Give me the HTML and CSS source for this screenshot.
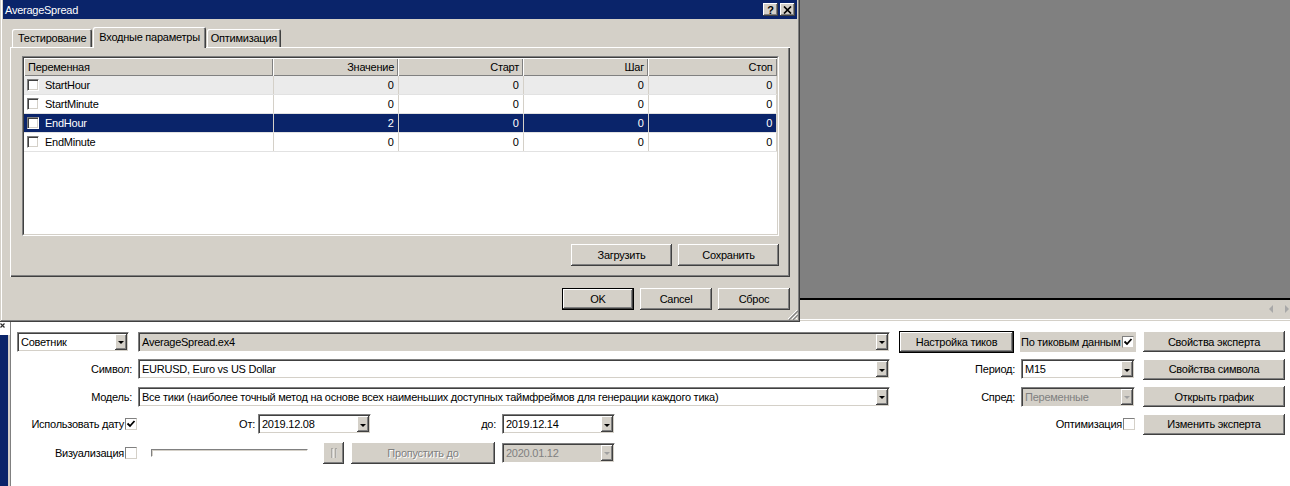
FILE: index.html
```html
<!DOCTYPE html>
<html lang="ru">
<head>
  <meta charset="UTF-8" />
  <title>Тестер стратегий</title>
  <link rel="stylesheet" href="styles.css">
</head>
<body>
  <div class="top">
    <div class="dialog">
      <div class="titlebar">
        <span>AverageSpread</span>
        <div class="caption">
          <span class="cap-btn">?</span>
          <span class="cap-btn">
            <svg width="9" height="8" viewBox="0 0 9 8"><path d="M1 0.5 L8 7.5 M8 0.5 L1 7.5" stroke="#000" stroke-width="1.7"/></svg>
          </span>
        </div>
      </div>

      <div class="dlg-body">
        <div class="tabs">
          <div class="tab">Тестирование</div>
          <div class="tab active">Входные параметры</div>
          <div class="tab narrow">Оптимизация</div>
        </div>

        <div class="tab-panel">
          <div class="grid-box">
            <div class="grid-inner">
              <table class="params">
                <colgroup>
                  <col class="c-name"><col class="c-num"><col class="c-num"><col class="c-num"><col>
                </colgroup>
                <thead>
                  <tr><th class="left">Переменная</th><th>Значение</th><th>Старт</th><th>Шаг</th><th>Стоп</th></tr>
                </thead>
                <tbody>
                  <tr class="hover"><td><span class="name"><span class="chk"></span>StartHour</span></td><td>0</td><td>0</td><td>0</td><td>0</td></tr>
                  <tr><td><span class="name"><span class="chk"></span>StartMinute</span></td><td>0</td><td>0</td><td>0</td><td>0</td></tr>
                  <tr class="selected"><td><span class="name"><span class="chk"></span>EndHour</span></td><td>2</td><td>0</td><td>0</td><td>0</td></tr>
                  <tr><td><span class="name"><span class="chk"></span>EndMinute</span></td><td>0</td><td>0</td><td>0</td><td>0</td></tr>
                </tbody>
              </table>
            </div>
          </div>
          <div class="panel-btns">
            <button class="btn">Загрузить</button>
            <button class="btn">Сохранить</button>
          </div>
        </div>

        <div class="dlg-btns">
          <button class="btn default">OK</button>
          <button class="btn">Cancel</button>
          <button class="btn">Сброс</button>
        </div>
      </div>

      <svg class="grip" width="11" height="11" viewBox="0 0 11 11">
        <path d="M10 1 L1 10 M10 5 L5 10 M10 9 L9 10" stroke="#fff" stroke-width="1"/>
        <path d="M11 2 L2 11 M11 6 L6 11" stroke="#808080" stroke-width="1.2"/>
      </svg>
    </div>

    <div class="desk">
      <div class="desk-fill"></div>
      <div class="desk-strip">
        <span class="scroll-l"></span>
        <span class="scroll-r"></span>
      </div>
    </div>
  </div>

  <div class="bottom">
    <div class="side">
      <div class="side-top">
        <svg width="5" height="5" viewBox="0 0 5 5"><path d="M0.5 0.5 L4.5 4.5 M4.5 0.5 L0.5 4.5" stroke="#303030" stroke-width="1.2"/></svg>
      </div>
      <div class="side-bar"></div>
    </div>

    <div class="tester">
      <!-- ряд 1 -->
      <div class="field sel-type"><span class="val">Советник</span><span class="drop"></span></div>
      <div class="field gray"><span class="val">AverageSpread.ex4</span><span class="drop"></span></div>
      <div class="cell-right">
        <button class="btn default ticks">Настройка тиков</button>
        <span class="tick-data">По тиковым данным<span class="box checked"><svg width="10" height="10" viewBox="0 0 10 10"><path d="M1.5 4.5 L4 7 L8.5 2" fill="none" stroke="#000" stroke-width="1.8"/></svg></span></span>
      </div>
      <button class="btn side-btn">Свойства эксперта</button>

      <!-- ряд 2 -->
      <span class="lbl">Символ:</span>
      <div class="field"><span class="val">EURUSD, Euro vs US Dollar</span><span class="drop"></span></div>
      <div class="cell-right">
        <span class="lbl">Период:</span>
        <div class="field small"><span class="val">M15</span><span class="drop"></span></div>
      </div>
      <button class="btn side-btn">Свойства символа</button>

      <!-- ряд 3 -->
      <span class="lbl">Модель:</span>
      <div class="field"><span class="val">Все тики (наиболее точный метод на основе всех наименьших доступных таймфреймов для генерации каждого тика)</span><span class="drop"></span></div>
      <div class="cell-right">
        <span class="lbl">Спред:</span>
        <div class="field small disabled"><span class="val">Переменные</span><span class="drop"></span></div>
      </div>
      <button class="btn side-btn">Открыть график</button>

      <!-- ряд 4 -->
      <div class="check-cell">Использовать дату<span class="box checked"><svg width="10" height="10" viewBox="0 0 10 10"><path d="M1.5 4.5 L4 7 L8.5 2" fill="none" stroke="#000" stroke-width="1.8"/></svg></span></div>
      <div class="dates">
        <span class="lbl from">От:</span>
        <div class="field date"><span class="val">2019.12.08</span><span class="drop"></span></div>
        <span class="lbl to">до:</span>
        <div class="field date"><span class="val">2019.12.14</span><span class="drop"></span></div>
      </div>
      <div class="check-cell">Оптимизация<span class="box"></span></div>
      <button class="btn side-btn">Изменить эксперта</button>

      <!-- ряд 5 -->
      <div class="check-cell">Визуализация<span class="box"></span></div>
      <div class="visual">
        <span class="track"></span>
        <button class="btn pause" disabled>
          <svg width="6" height="10" viewBox="0 0 6 10"><path d="M1 0 V10 M5 0 V10" stroke="#808080" stroke-width="1"/><path d="M2 1 V11 M6 1 V11" stroke="#fff" stroke-width="1"/></svg>
        </button>
        <button class="btn skip" disabled>Пропустить до</button>
        <div class="field date disabled"><span class="val">2020.01.12</span><span class="drop"></span></div>
      </div>
    </div>
  </div>
</body>
</html>
```

FILE: styles.css
```css
body {
  margin: 0;
  width: 1290px;
  height: 486px;
  overflow: hidden;
  background: #fff;
  color: #000;
  font-family: "Liberation Sans", Arial, sans-serif;
  font-size: 11px;
  letter-spacing: -0.25px;
}
button {
  font: inherit;
  letter-spacing: inherit;
  color: #000;
  padding: 0;
  border: none;
  cursor: default;
}

/* классические рамки */
.btn {
  background: #d4d0c8;
  box-shadow: inset -1px -1px #404040, inset 1px 1px #fff, inset -2px -2px #808080, inset 2px 2px #d4d0c8;
  height: 22px;
}
.btn.default {
  border: 1px solid #000;
  box-shadow: inset -1px -1px #404040, inset 1px 1px #fff, inset -2px -2px #808080;
}
.btn:disabled {
  color: #808080;
  text-shadow: 1px 1px #fff;
}

.top {
  display: flex;
  height: 322px;
}

/* окно диалога */
.dialog {
  position: relative;
  width: 800px;
  height: 322px;
  box-sizing: border-box;
  padding: 0 3px 3px;
  background: #d4d0c8;
  box-shadow: inset -1px -1px #404040, inset 1px 0 #d4d0c8, inset -2px -2px #808080, inset 2px 0 #fff;
  display: flex;
  flex-direction: column;
}
.titlebar {
  height: 19px;
  background: #0a246a;
  color: #fff;
  display: flex;
  align-items: center;
  justify-content: space-between;
  padding: 0 2px;
}
.caption {
  display: flex;
  gap: 2px;
}
.cap-btn {
  width: 15px;
  height: 13px;
  background: #d4d0c8;
  box-shadow: inset -1px -1px #404040, inset 1px 1px #fff, inset -2px -2px #808080;
  color: #000;
  font-weight: bold;
  font-size: 11px;
  display: flex;
  align-items: center;
  justify-content: center;
}
.dlg-body {
  flex: 1;
  padding: 8px 7px 0;
  display: flex;
  flex-direction: column;
}
.tabs {
  position: relative;
  z-index: 1;
  display: flex;
  align-items: flex-end;
  height: 20px;
  padding-left: 2px;
  gap: 1px;
}
.tab {
  height: 18px;
  box-sizing: border-box;
  padding: 0 6px;
  display: flex;
  align-items: center;
  background: #d4d0c8;
  border-radius: 2px 2px 0 0;
  box-shadow: inset 1px 1px #fff, inset -1px 0 #404040, inset -2px 0 #808080;
}
.tab.active {
  height: 21px;
  margin-bottom: -1px;
  padding: 0 6px 2px;
}
.tab.narrow { padding: 0 4px; }
.tab-panel {
  height: 230px;
  box-sizing: border-box;
  padding: 9px 11px 0 12px;
  box-shadow: inset 1px 1px #fff, inset -1px -1px #404040, inset -2px -2px #808080;
}
.grid-box {
  height: 180px;
  box-sizing: border-box;
  border: 1px solid;
  border-color: #808080 #fff #fff #808080;
}
.grid-inner {
  height: 100%;
  box-sizing: border-box;
  border: 1px solid;
  border-color: #404040 #d4d0c8 #d4d0c8 #404040;
  background: #fff;
  overflow: hidden;
}
.params {
  width: 100%;
  table-layout: fixed;
  border-collapse: collapse;
}
.c-name { width: 249px; }
.c-num { width: 125px; }
.params th {
  height: 18px;
  padding: 0 4px;
  font-weight: normal;
  text-align: right;
  background: #d4d0c8;
  box-shadow: inset 1px 1px #fff, inset -1px -1px #808080;
}
.params th.left { text-align: left; }
.params td {
  height: 18px;
  padding: 0 4px 0 3px;
  text-align: right;
  border-right: 1px solid #d4d0c8;
  border-bottom: 1px solid #e2e2e2;
  white-space: nowrap;
}
.params td:first-child { text-align: left; }
.params tr.hover td { background: #ebebeb; }
.params tr.selected td {
  background: #0a246a;
  color: #fff;
}
.name {
  display: flex;
  align-items: center;
  gap: 6px;
}
.chk {
  width: 12px;
  height: 12px;
  box-sizing: border-box;
  background: #fff;
  border: 1px solid;
  border-color: #808080 #fff #fff #808080;
  box-shadow: inset 1px 1px #404040, inset -1px -1px #d4d0c8;
}
.panel-btns {
  display: flex;
  justify-content: flex-end;
  gap: 6px;
  margin-top: 8px;
}
.panel-btns .btn { width: 101px; }
.dlg-btns {
  display: flex;
  justify-content: flex-end;
  gap: 6px;
  margin-top: 11px;
}
.dlg-btns .btn { width: 72px; }
.grip {
  position: absolute;
  right: 2px;
  bottom: 2px;
}

/* серая область справа */
.desk {
  flex: 1;
  display: flex;
  flex-direction: column;
}
.desk-fill {
  flex: 1;
  background: #808080;
}
.desk-strip {
  height: 24px;
  box-sizing: border-box;
  border-top: 2px solid #000;
  background: #d4d0c8;
  box-shadow: inset 0 -1px #fff, inset 0 -2px #d4d0c8, inset 0 -3px #fff;
  display: flex;
  justify-content: flex-end;
  align-items: center;
  gap: 12px;
  padding: 0 1px 4px 0;
}
.scroll-l, .scroll-r {
  width: 0;
  height: 0;
  border-top: 4px solid transparent;
  border-bottom: 4px solid transparent;
}
.scroll-l { border-right: 4px solid #a8a8a8; }
.scroll-r { border-left: 4px solid #a8a8a8; }

/* нижняя панель тестера */
.bottom {
  display: flex;
  height: 164px;
}
.side {
  width: 10px;
  display: flex;
  flex-direction: column;
}
.side-top {
  height: 13px;
  padding: 1px 0 0 0;
  box-sizing: border-box;
}
.side-top svg { display: block; }
.side-bar {
  flex: 1;
  width: 8px;
  background: #0a246a;
  border-right: 2px solid #d4d0c8;
}
.tester {
  flex: 1;
  box-shadow: inset 1px 0 #808080;
  padding: 6px 0 0 7px;
  display: grid;
  grid-template-columns: 121px 752px 246px 149px;
  grid-template-rows: 27px 28px 27px 28px 29px;
  align-items: center;
  align-content: start;
}
.lbl {
  justify-self: end;
  padding-right: 6px;
  white-space: nowrap;
}
.field {
  height: 20px;
  box-sizing: border-box;
  border: 1px solid;
  border-color: #808080 #fff #fff #808080;
  box-shadow: inset 1px 1px #404040, inset -1px -1px #d4d0c8;
  background: #fff;
  display: flex;
  align-items: stretch;
  padding: 1px;
}
.field .val {
  flex: 1;
  padding-left: 2px;
  display: flex;
  align-items: center;
  white-space: nowrap;
  overflow: hidden;
}
.drop {
  width: 12px;
  flex: none;
  background: #d4d0c8;
  box-shadow: inset -1px -1px #404040, inset 1px 1px #fff, inset -2px -2px #808080;
  display: flex;
  align-items: center;
  justify-content: center;
}
.drop::after {
  content: "";
  border-left: 3px solid transparent;
  border-right: 3px solid transparent;
  border-top: 3px solid #000;
  margin-top: 2px;
}
.field.gray { background: #d4d0c8; }
.field.disabled {
  background: #d4d0c8;
  color: #808080;
}
.field.disabled .drop::after { border-top-color: #a0a0a0; }
.sel-type { width: 112px; }
.field.small { width: 114px; }
.field.date { width: 113px; }

.cell-right {
  display: flex;
  justify-content: flex-end;
  align-items: center;
  gap: 0;
}
.cell-right .field.small { margin-right: 1px; }
.ticks {
  width: 115px;
  margin-right: 6px;
}
.tick-data {
  width: 116px;
  height: 20px;
  box-sizing: border-box;
  background: #d4d0c8;
  display: flex;
  align-items: center;
  padding-left: 1px;
  white-space: nowrap;
}
.tick-data .box { margin-left: 1px; }
.side-btn {
  width: 142px;
  height: 21px;
  justify-self: end;
}
.box {
  width: 12px;
  height: 12px;
  flex: none;
  box-sizing: border-box;
  background: #fff;
  border: 1px solid;
  border-color: #808080 #d4d0c8 #d4d0c8 #808080;
  display: flex;
  align-items: center;
  justify-content: center;
}
.check-cell {
  display: flex;
  justify-content: flex-end;
  align-items: center;
  gap: 1px;
  padding-right: 1px;
  white-space: nowrap;
}
.dates {
  display: flex;
  align-items: center;
}
.dates .lbl { padding-right: 0; }
.lbl.from {
  width: 117px;
  text-align: right;
  margin-right: 3px;
}
.lbl.to {
  width: 125px;
  text-align: right;
  margin-right: 6px;
}
.visual {
  display: flex;
  align-items: center;
  padding-left: 13px;
}
.track {
  width: 157px;
  height: 8px;
  box-sizing: border-box;
  border: 1px solid;
  border-color: #808080 #fff #fff #808080;
  box-shadow: inset 1px 1px #d4d0c8;
  background: #fff;
  margin-right: 15px;
}
.pause {
  width: 21px;
  height: 22px;
  display: flex;
  align-items: center;
  justify-content: center;
  margin-right: 7px;
}
.skip {
  width: 144px;
  margin-right: 7px;
}
```
